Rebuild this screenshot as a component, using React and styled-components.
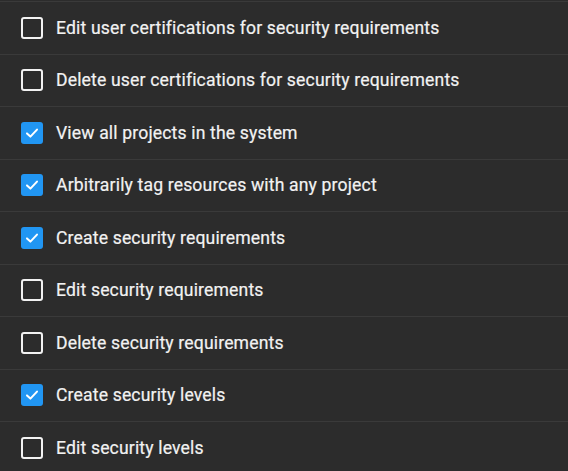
import React from 'react'
import styled, { createGlobalStyle } from 'styled-components'

const GlobalStyle = createGlobalStyle`
  html, body {
    margin: 0;
    padding: 0;
    background: #2c2c2c;
  }
  * { box-sizing: border-box; }
`

const List = styled.div`
  padding-top: 1px;
  background: #2c2c2c;
  font-family: Roboto, "Noto Sans", sans-serif;
`

const Row = styled.label`
  display: flex;
  align-items: center;
  height: 52.5px;
  padding-left: 21px;
  border-top: 1px solid #3a3a3a;
  cursor: pointer;
`

const Box = styled.span`
  flex: none;
  width: 22px;
  height: 22px;
  border-radius: 3px;
  border: ${p => (p.checked ? 'none' : '2px solid #f2f2f2')};
  background: ${p => (p.checked ? '#2196f3' : 'transparent')};
  display: flex;
  align-items: center;
  justify-content: center;
`

const Label = styled.span`
  margin-left: 13px;
  font-size: 17.6px;
  letter-spacing: 0.15px;
  color: #f2f2f2;
  -webkit-text-stroke: 0.2px #f2f2f2;
`

const items = [
  ['Edit user certifications for security requirements', false],
  ['Delete user certifications for security requirements', false],
  ['View all projects in the system', true],
  ['Arbitrarily tag resources with any project', true],
  ['Create security requirements', true],
  ['Edit security requirements', false],
  ['Delete security requirements', false],
  ['Create security levels', true],
  ['Edit security levels', false],
]

function Check() {
  return (
    <svg width="16" height="16" viewBox="0 0 16 16">
      <path d="M3 8.4 L6.4 11.6 L13 4.6" fill="none" stroke="#fff" strokeWidth="2" strokeLinecap="round" strokeLinejoin="round" />
    </svg>
  )
}

export default function App() {
  return (
    <>
      <GlobalStyle />
      <List>
        {items.map(([text, checked]) => (
          <Row key={text}>
            <Box checked={checked}>{checked && <Check />}</Box>
            <Label>{text}</Label>
          </Row>
        ))}
      </List>
    </>
  )
}
